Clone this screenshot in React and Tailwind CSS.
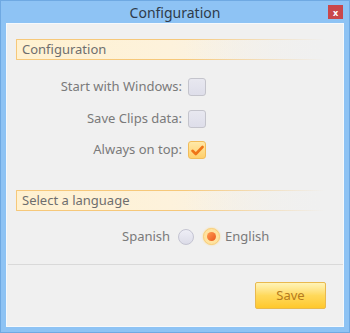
import React from "react";

const font = { fontFamily: '"Noto Sans", "Open Sans", sans-serif' };

function SectionHeader({ children }) {
  return (
    <div className="relative ml-[9px] mr-[18px] h-[21px]">
      <div className="absolute inset-0 rounded-[1px] border-y border-l border-[#f6c87a] bg-gradient-to-r from-[#fff1d0] via-[#fdf2dc] to-[#f0f0f0]" />
      <div className="absolute right-0 top-0 h-full w-[140px] bg-gradient-to-r from-transparent to-[#f0f0f0]" />
      <span className="relative flex h-full items-center pl-[6px] text-[13px] text-[#6e6e6e]">
        {children}
      </span>
    </div>
  );
}

function CheckRow({ label, checked }) {
  return (
    <div className="flex h-[18px] items-center">
      <span className="w-[181px] pr-[6px] text-right text-[13px] text-[#7a7a7a]">{label}</span>
      {checked ? (
        <span className="flex h-[18px] w-[18px] items-center justify-center rounded-[3px] border border-[#f2bc5a] bg-gradient-to-b from-[#ffe9a8] to-[#ffcf6a]">
          <svg width="13" height="11" viewBox="0 0 13 11">
            <path d="M1.5 5.8 L4.8 9 L11.5 2" fill="none" stroke="#ef7418" strokeWidth="2.6" strokeLinecap="round" strokeLinejoin="round" />
          </svg>
        </span>
      ) : (
        <span className="h-[18px] w-[18px] rounded-[3px] border border-[#c4c4cc] bg-gradient-to-b from-[#e8e8f0] to-[#dedeea]" />
      )}
    </div>
  );
}

export default function App() {
  return (
    <div style={font} className="flex h-[333px] w-[350px] flex-col border border-[#6fa9e2] bg-[#8ec3f4]">
      <div className="relative flex h-[22px] items-center justify-center">
        <span className="text-[14px] text-[#2e3b4a]">Configuration</span>
        <div className="absolute right-[6px] top-[4px] flex h-[14px] w-[15px] items-center justify-center bg-[#c9474b] text-[9px] font-bold leading-none text-white">
          x
        </div>
      </div>
      <div className="mx-[5px] flex h-[304px] flex-col border border-[#f6f9fc] bg-[#f0f0f0]">
        <div className="mt-[15px]">
          <SectionHeader>Configuration</SectionHeader>
        </div>
        <div className="mt-[18px] flex flex-col gap-[13.5px]">
          <CheckRow label="Start with Windows:" />
          <CheckRow label="Save Clips data:" />
          <CheckRow label="Always on top:" checked />
        </div>
        <div className="mt-[31px]">
          <SectionHeader>Select a language</SectionHeader>
        </div>
        <div className="mt-[17px] flex h-[17px] items-center pl-[115px] text-[13px] text-[#7a7a7a]">
          <span>Spanish</span>
          <span className="ml-[8px] h-[16px] w-[16px] rounded-full border border-[#c4c4d2] bg-gradient-to-b from-[#eeeef6] to-[#dcdce8]" />
          <span className="ml-[9px] flex h-[17px] w-[17px] items-center justify-center rounded-full border border-[#f7cf7e] bg-[#ffe3a0] shadow-[0_0_2px_#ffd680]">
            <span className="h-[9px] w-[9px] rounded-full bg-gradient-to-br from-[#ff9a50] to-[#e9561a]" />
          </span>
          <span className="ml-[5px]">English</span>
        </div>
        <div className="mt-[19px] ml-[1px] h-px bg-[#d9d9d9]" />
        <div className="mt-[17px] flex justify-end pr-[17px]">
          <button className="flex h-[27px] w-[71px] items-center justify-center rounded-[2px] border border-[#e9b94e] bg-gradient-to-b from-[#fff4b8] via-[#ffd95a] to-[#ffc82a] text-[13px] text-[#b57b1e]">
            Save
          </button>
        </div>
      </div>
    </div>
  );
}
